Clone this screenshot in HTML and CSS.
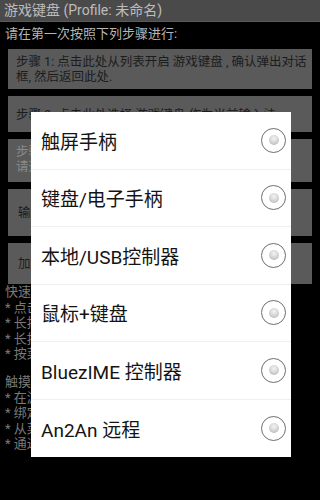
FILE: index.html
```html
<!DOCTYPE html>
<html lang="zh">
<head>
<meta charset="utf-8">
<link rel="stylesheet" href="styles.css">
</head>
<body>
<div class="screen">
  <div class="titlebar">游戏键盘 (Profile: 未命名)</div>
  <div class="content">
    <div class="intro">请在第一次按照下列步骤进行:</div>
    <div class="card c1">步骤 1: 点击此处从列表开启 游戏键盘 , 确认弹出对话框, 然后返回此处.</div>
    <div class="card c2">步骤 2: 点击此处选择 游戏键盘 作为当前输入法</div>
    <div class="card c3 disabled">步骤 3: 在游戏中长按输入框, 选择输入法对话框,<br>请选择 游戏键盘.</div>
    <div class="card c4">输入法设置</div>
    <div class="card c5">加载配置文件</div>
    <div class="notes">
      <p>快速入门:</p>
      <p>* 点击一个按键来绑定</p>
      <p>* 长按一个按键来删除</p>
      <p>* 长按屏幕空白处来添加</p>
      <p>* 按菜单键打开设置</p>
      <p class="gap">触摸屏游戏:</p>
      <p>* 在游戏中使用触摸屏模拟(需Root点)</p>
      <p>* 绑定按键到屏幕上的位置</p>
      <p>* 从菜单中选择触摸屏模式</p>
      <p>* 通过设置调整灵敏度</p>
    </div>
  </div>
  <div class="dialog">
    <div class="row"><span class="label">触屏手柄</span><span class="radio"></span></div>
    <div class="row"><span class="label">键盘/电子手柄</span><span class="radio"></span></div>
    <div class="row"><span class="label">本地/USB控制器</span><span class="radio"></span></div>
    <div class="row"><span class="label">鼠标+键盘</span><span class="radio"></span></div>
    <div class="row"><span class="label">BluezIME 控制器</span><span class="radio"></span></div>
    <div class="row last"><span class="label">An2An 远程</span><span class="radio"></span></div>
  </div>
</div>
</body>
</html>
```

FILE: styles.css
```css
html, body {
  margin: 0;
  padding: 0;
  background: #000;
}
.screen {
  position: relative;
  width: 320px;
  height: 500px;
  overflow: hidden;
  background: #000;
  font-family: "Roboto", "Noto Sans CJK SC", sans-serif;
}
.titlebar {
  height: 22px;
  line-height: 21px;
  background: #4a4a4a;
  color: #bcbcbc;
  font-size: 14px;
  padding-left: 4px;
  border-bottom: 1px solid #5a5a5a;
  box-sizing: border-box;
}
.content {
  padding: 3px 8px 0 8px;
}
.intro {
  color: #b5b5b5;
  font-size: 13px;
  line-height: 17px;
  margin-left: -3px;
  margin-bottom: 7px;
}
.card {
  background: #5a5a5a;
  color: #1c1c1c;
  font-size: 12.5px;
  line-height: 15px;
  padding: 5px 2px 5px 8px;
  margin-bottom: 7px;
}
.c1 { height: 30px; }
.c2 { height: 25px; padding-top: 11px; padding-bottom: 0; }
.c3 { height: 33px; color: #8a8a8a; white-space: nowrap; overflow: hidden; }
.c4 { height: 47px; padding: 0 10px; display: flex; align-items: center; box-sizing: border-box; }
.c5 { height: 41px; padding: 0 10px; display: flex; align-items: center; box-sizing: border-box; }
.notes {
  color: #7a7a7a;
  font-size: 13px;
  line-height: 15.6px;
  margin-left: -3px;
  margin-top: -7px;
}
.notes p { margin: 0; white-space: nowrap; }
.notes .gap { margin-top: 12px; }
.dialog {
  position: absolute;
  left: 31px;
  top: 112px;
  width: 260px;
  background: #fff;
}
.row {
  height: 57.5px;
  display: flex;
  align-items: center;
  justify-content: space-between;
  padding: 0 5px 0 10px;
  border-bottom: 1px solid #efefef;
  box-sizing: border-box;
}
.row.last { border-bottom: none; }
.label {
  font-size: 19px;
  color: #141414;
}
.radio {
  width: 25px;
  height: 25px;
  border: 1.5px solid #6e6e6e;
  border-radius: 50%;
  box-sizing: border-box;
  display: flex;
  align-items: center;
  justify-content: center;
}
.radio::after {
  content: "";
  width: 10px;
  height: 10px;
  border-radius: 50%;
  background: radial-gradient(circle at 50% 35%, #f4f4f4 0%, #d2d2d2 55%, #a6a6a6 100%);
}
```
